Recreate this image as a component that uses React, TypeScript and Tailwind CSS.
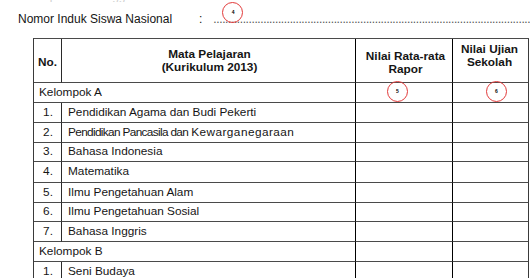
import React from "react";

const subjectsA = [
  "Pendidikan Agama dan Budi Pekerti",
  "__PPKN__",
  "Bahasa Indonesia",
  "Matematika",
  "Ilmu Pengetahuan Alam",
  "Ilmu Pengetahuan Sosial",
  "Bahasa Inggris",
];
const heightsA = ["h-[20px]", "h-[20px]", "h-[19px]", "h-[21px]", "h-[20px]", "h-[19px]", "h-[20px]"];

function Circle({ n, className }: { n: string; className: string }) {
  return (
    <div
      className={`absolute w-[21px] h-[21px] rounded-full border border-[#e23a3a] flex items-center justify-center text-[5px] font-bold text-black leading-none ${className}`}
    >
      {n}
    </div>
  );
}

function ValueCells({ circles }: { circles?: boolean }) {
  return (
    <>
      <div className="relative border-r border-r-black border-b border-b-[#4a4a4a]">
        {circles && <Circle n="5" className="left-[31px] top-[-2px]" />}
      </div>
      <div className="relative border-r border-r-[#3a3a3a] border-b border-b-[#4a4a4a]">
        {circles && <Circle n="6" className="left-[33px] top-[-2px]" />}
      </div>
    </>
  );
}

export default function App() {
  const font = { fontFamily: '"Liberation Sans", Arial, sans-serif' };
  return (
    <div className="w-[530px] h-[278px] overflow-hidden bg-white text-[#151515]" style={font}>
      <div className="h-[2px] overflow-hidden pl-[27px]">
        <div className="mt-[-11px] text-[12px] leading-[14px] text-[#d0d0d0] whitespace-nowrap">
          Tempat dan Tanggal Lahir
        </div>
      </div>
      <div className="pt-[10px] pl-[18px] flex items-baseline text-[12px] leading-[14px]">
        <span className="w-[181px] shrink-0">Nomor Induk Siswa Nasional</span>
        <span className="shrink-0">:</span>
        <span className="relative ml-[11px] flex-1 whitespace-nowrap text-[#555] tracking-[-0.4px]">
          <span className="block overflow-hidden">
            {".".repeat(120)}
          </span>
          <Circle n="4" className="left-[9px] top-[-10px] bg-transparent" />
        </span>
      </div>

      <div className="mt-[12px] ml-[33px] w-[496px] border-t border-t-[#4a4a4a] border-l border-l-[#3a3a3a] grid grid-cols-[28px_294px_97px_76px] text-[11.8px]">
        {/* header */}
        <div className="h-[44px] border-r border-r-[#2a2a2a] border-b border-b-[#4a4a4a] flex items-center justify-center pt-[4px] font-bold">
          No.
        </div>
        <div className="border-r border-r-black border-b border-b-[#4a4a4a] flex flex-col items-center justify-center font-bold leading-[13px] pt-[1px] pl-[2px]">
          <span>Mata Pelajaran</span>
          <span>(Kurikulum 2013)</span>
        </div>
        <div className="border-r border-r-black border-b border-b-[#4a4a4a] flex flex-col items-center justify-center font-bold leading-[13px] pt-[5px] pl-[3px]">
          <span>Nilai Rata-rata</span>
          <span>Rapor</span>
        </div>
        <div className="border-r border-r-[#3a3a3a] border-b border-b-[#4a4a4a] flex flex-col items-center justify-center font-bold leading-[13px] pb-[9px] pr-[2px]">
          <span>Nilai Ujian</span>
          <span>Sekolah</span>
        </div>

        {/* Kelompok A */}
        <div className="col-span-2 h-[20px] border-r border-r-black border-b border-b-[#4a4a4a] flex items-center pl-[5px]">
          Kelompok A
        </div>
        <ValueCells circles />

        {subjectsA.map((s, i) => (
          <React.Fragment key={i}>
            <div className={`${heightsA[i]} border-r border-r-[#2a2a2a] border-b border-b-[#4a4a4a] flex items-center justify-center pl-[1px]`}>
              {i + 1}.
            </div>
            <div className="border-r border-r-black border-b border-b-[#4a4a4a] flex items-center pl-[6px] whitespace-nowrap">
              {s === "__PPKN__" ? (
                <>
                  <span className="tracking-[-0.65px]">Pendidikan Pancasila dan</span>
                  <span className="ml-[3px] tracking-[0.45px]">Kewarganegaraan</span>
                </>
              ) : (
                s
              )}
            </div>
            <ValueCells />
          </React.Fragment>
        ))}

        {/* Kelompok B */}
        <div className="col-span-2 h-[20px] border-r border-r-black border-b border-b-[#4a4a4a] flex items-center pl-[5px]">
          Kelompok B
        </div>
        <ValueCells />

        <div className="h-[20px] border-r border-r-[#2a2a2a] border-b border-b-[#4a4a4a] flex items-center justify-center pl-[1px]">
          1.
        </div>
        <div className="border-r border-r-black border-b border-b-[#4a4a4a] flex items-center pl-[6px]">
          Seni Budaya
        </div>
        <ValueCells />
      </div>
    </div>
  );
}
